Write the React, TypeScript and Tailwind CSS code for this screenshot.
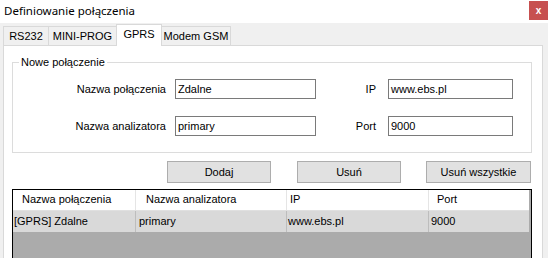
const FONT = "font-['Liberation_Sans',Arial,sans-serif]";

const TABS = [
  { label: "RS232", w: "w-[46px]" },
  { label: "MINI-PROG", w: "w-[69px]" },
  { label: "GPRS", w: "w-[46px]" },
  { label: "Modem GSM", w: "w-[70px]" },
];

function Field({ label, value, labelW, inputW, gap }: { label: string; value: string; labelW: string; inputW: string; gap: string }) {
  return (
    <div className={`flex items-center ${gap}`}>
      <span className={`${labelW} text-right`}>{label}</span>
      <div className={`${inputW} h-[20px] border border-[#7a7a7a] bg-white pl-[2px] leading-[18px]`}>{value}</div>
    </div>
  );
}

function Btn({ children, w }: { children: string; w: string }) {
  return (
    <button className={`${w} h-[22px] border border-[#adadad] bg-[#e1e1e1] text-black leading-[20px]`}>{children}</button>
  );
}

export default function App() {
  return (
    <div className={`w-[548px] h-[258px] overflow-hidden bg-[#f0f0f0] text-[11px] text-black ${FONT}`}>
      {/* title bar */}
      <div className="h-[23px] bg-white flex items-start justify-between">
        <span className="pl-[4px] pt-[3px] text-[11.5px] font-['Noto_Sans',sans-serif] leading-[16px]">Definiowanie połączenia</span>
        <div className="w-[19px] h-[19px] mt-[1px] bg-[#c75050] flex items-center justify-center text-white text-[10px] font-bold">x</div>
      </div>

      {/* tabs */}
      <div className="flex items-end h-[22px] pl-[3px]">
        {TABS.map((t) =>
          t.label === "GPRS" ? (
            <div key={t.label} className={`${t.w} relative z-10 -mb-px -ml-px h-[22px] bg-white border border-b-0 border-[#d9d9d9] text-center leading-[19px]`}>
              {t.label}
            </div>
          ) : (
            <div key={t.label} className={`${t.w} h-[19px] bg-[#f0f0f0] border border-b-0 border-[#d9d9d9] -ml-px first:ml-0 text-center leading-[18px]`}>
              {t.label}
            </div>
          )
        )}
      </div>

      {/* tab page */}
      <div className="ml-[3px] w-[540px] h-[300px] bg-white border border-[#d9d9d9] pl-[8px]">
        <fieldset className="mt-[10px] w-[520px] h-[97px] border border-[#dcdcdc] px-0">
          <legend className="ml-[6px] px-[2px] leading-[13px]">Nowe połączenie</legend>
          <div className="mt-[10px] flex">
            <Field label="Nazwa połączenia" value="Zdalne" labelW="w-[153px]" inputW="w-[141px]" gap="gap-[9px]" />
            <Field label="IP" value="www.ebs.pl" labelW="w-[60px]" inputW="w-[125px]" gap="gap-[12px]" />
          </div>
          <div className="mt-[17px] flex">
            <Field label="Nazwa analizatora" value="primary" labelW="w-[153px]" inputW="w-[141px]" gap="gap-[9px]" />
            <Field label="Port" value="9000" labelW="w-[60px]" inputW="w-[125px]" gap="gap-[12px]" />
          </div>
        </fieldset>

        <div className="mt-[8px] flex pl-[155px]">
          <Btn w="w-[104px]">Dodaj</Btn>
          <div className="ml-[26px]"><Btn w="w-[104px]">Usuń</Btn></div>
          <div className="ml-[25px]"><Btn w="w-[105px]">Usuń wszystkie</Btn></div>
        </div>

        <div className="mt-[6px] w-[520px] h-[100px] border border-black bg-[#ababab]">
          <div className="flex h-[20px] bg-white leading-[19px] mr-[2px]">
            <div className="w-[123px] pl-[9px] border-r border-[#e5e5e5]">Nazwa połączenia</div>
            <div className="w-[151px] pl-[10px] border-r border-[#e5e5e5]">Nazwa analizatora</div>
            <div className="w-[142px] pl-[3px] border-r border-[#e5e5e5]">IP</div>
            <div className="flex-1 pl-[8px]">Port</div>
          </div>
          <div className="flex h-[22px] bg-[#d9d9d9] leading-[21px] mr-[2px] border-t border-[#e0e0e0]">
            <div className="w-[123px] pl-[1px] border-r border-[#bdbdbd]">[GPRS] Zdalne</div>
            <div className="w-[151px] pl-[3px] border-r border-[#bdbdbd]">primary</div>
            <div className="w-[142px] pl-[1px] border-r border-[#bdbdbd]">www.ebs.pl</div>
            <div className="flex-1 pl-[2px]">9000</div>
          </div>
        </div>
      </div>
    </div>
  );
}
